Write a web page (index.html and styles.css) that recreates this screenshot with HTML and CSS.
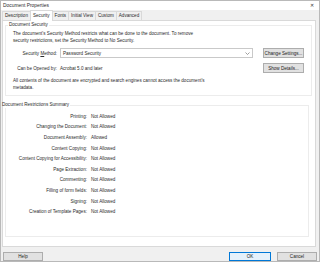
FILE: index.html
```html
<!DOCTYPE html>
<html>
<head>
  <title>Document Properties</title>
  <link rel="stylesheet" href="styles.css">
</head>
<body>
  <div class="dialog">
    <!-- Title bar -->
    <div class="titlebar">
      <span class="title">Document Properties</span>
      <span class="close">&#x2715;</span>
    </div>

    <!-- Tabs -->
    <div class="tabs">
      <div class="tab">Description</div>
      <div class="tab active">Security</div>
      <div class="tab">Fonts</div>
      <div class="tab">Initial View</div>
      <div class="tab">Custom</div>
      <div class="tab">Advanced</div>
    </div>

    <div class="panel">
      <!-- Document security -->
      <fieldset class="group security">
        <legend>Document Security</legend>
        <p class="intro">The document's Security Method restricts what can be done to the document. To remove security restrictions, set the Security Method to No Security.</p>

        <div class="row method-row">
          <label class="row-label">Security <u>M</u>ethod:</label>
          <div class="select">
            <span>Password Security</span>
            <svg class="chevron" width="5" height="3" viewBox="0 0 5 3"><path d="M0.5 0.5 L2.5 2.5 L4.5 0.5" fill="none" stroke="#777" stroke-width="0.7"/></svg>
          </div>
          <button type="button" class="btn side-btn">Change Settings...</button>
        </div>

        <div class="row opened-row">
          <span class="row-label">Can be Opened by:</span>
          <span class="row-value">Acrobat 5.0 and later</span>
          <button type="button" class="btn side-btn">Show Details...</button>
        </div>

        <p class="note">All contents of the document are encrypted and search engines cannot access the document's metadata.</p>
      </fieldset>

      <!-- Restrictions summary -->
      <fieldset class="group restrictions">
        <legend>Document Restrictions Summary</legend>
        <div class="summary">
          <span class="key">Printing:</span><span class="val">Not Allowed</span>
          <span class="key">Changing the Document:</span><span class="val">Not Allowed</span>
          <span class="key">Document Assembly:</span><span class="val">Allowed</span>
          <span class="key">Content Copying:</span><span class="val">Not Allowed</span>
          <span class="key">Content Copying for Accessibility:</span><span class="val">Not Allowed</span>
          <span class="key">Page Extraction:</span><span class="val">Not Allowed</span>
          <span class="key">Commenting:</span><span class="val">Not Allowed</span>
          <span class="key">Filling of form fields:</span><span class="val">Not Allowed</span>
          <span class="key">Signing:</span><span class="val">Not Allowed</span>
          <span class="key">Creation of Template Pages:</span><span class="val">Not Allowed</span>
        </div>
      </fieldset>
    </div>

    <!-- Footer buttons -->
    <div class="footer">
      <button type="button" class="btn help-btn">Help</button>
      <div class="spacer"></div>
      <button type="button" class="btn ok-btn">OK</button>
      <button type="button" class="btn cancel-btn">Cancel</button>
    </div>
  </div>
</body>
</html>
```

FILE: styles.css
```css
/* Document Properties dialog */
body {
  margin: 0;
  font-family: "Liberation Sans", Arial, sans-serif;
  font-size: 4.6px;
  color: #2b2b2b;
  background: #f0f0f0;
}
.dialog {
  width: 320px;
  height: 262px;
  box-sizing: border-box;
  border: 1px solid #b9b9b9;
  background: #f0f0f0;
  display: flex;
  flex-direction: column;
}

/* title bar */
.titlebar {
  height: 9px;
  background: #fff;
  display: flex;
  align-items: center;
  justify-content: space-between;
  padding: 0 5px 0 2px;
}
.title {
  font-size: 4.9px;
}
.close {
  font-size: 4.5px;
  color: #333;
}

/* tabs */
.tabs {
  height: 10px;
  display: flex;
  align-items: flex-end;
  padding-left: 1px;
  position: relative;
  z-index: 1;
}
.tab {
  height: 8px;
  line-height: 8px;
  padding: 0 2px;
  border: 1px solid #d9d9d9;
  border-bottom: none;
  margin-right: -1px;
  background: #f0f0f0;
}
.tab.active {
  height: 10px;
  line-height: 10px;
  background: #fff;
  margin-bottom: -1px;
}

/* main panel */
.panel {
  height: 224px;
  margin: 0 3px 0 1px;
  background: #fff;
  border: 1px solid #d9d9d9;
  padding: 1px 6px 0 2px;
}
.group {
  margin: 0;
  border: 1px solid #ececec;
  padding: 0 7px 4px 7px;
}
.group legend {
  padding: 0 1px;
  margin-left: -5px;
  line-height: 6px;
}
.intro, .note {
  margin: 3px 0 0;
  line-height: 6.5px;
  width: 185px;
}
.note {
  margin-top: 5px;
  width: 205px;
}

.row {
  display: flex;
  align-items: center;
  height: 10px;
}
.method-row {
  margin-top: 4px;
}
.opened-row {
  margin-top: 5px;
}
.row-label {
  width: 44px;
  text-align: right;
  margin-right: 3px;
}
.row-value {
  flex: 1;
}
.select {
  width: 193px;
  height: 10px;
  box-sizing: border-box;
  border: 1px solid #c9c9c9;
  display: flex;
  align-items: center;
  justify-content: space-between;
  padding: 0 2px 0 2px;
}
.btn {
  font-family: inherit;
  font-size: 4.6px;
  color: #222;
  background: #e1e1e1;
  border: 1px solid #adadad;
  padding: 0;
  height: 10px;
  box-sizing: border-box;
}
.side-btn {
  width: 41px;
  margin-left: 10px;
}

/* restrictions list */
.restrictions {
  margin-top: 6px;
  height: 135px;
  box-sizing: border-box;
  padding: 0;
}
.summary {
  display: grid;
  grid-template-columns: 81px auto;
  column-gap: 4px;
  grid-auto-rows: 10.6px;
  align-items: center;
  margin-top: 3px;
}
.key {
  text-align: right;
}

/* footer */
.footer {
  display: flex;
  align-items: center;
  padding: 5px 2px 0 2px;
}
.spacer {
  flex: 1;
}
.footer .btn {
  height: 9px;
}
.help-btn {
  width: 40px;
}
.ok-btn {
  width: 42px;
  margin-right: 6px;
  background: #e5f1fb;
  border-color: #0078d7;
}
.cancel-btn {
  width: 40px;
}
```
